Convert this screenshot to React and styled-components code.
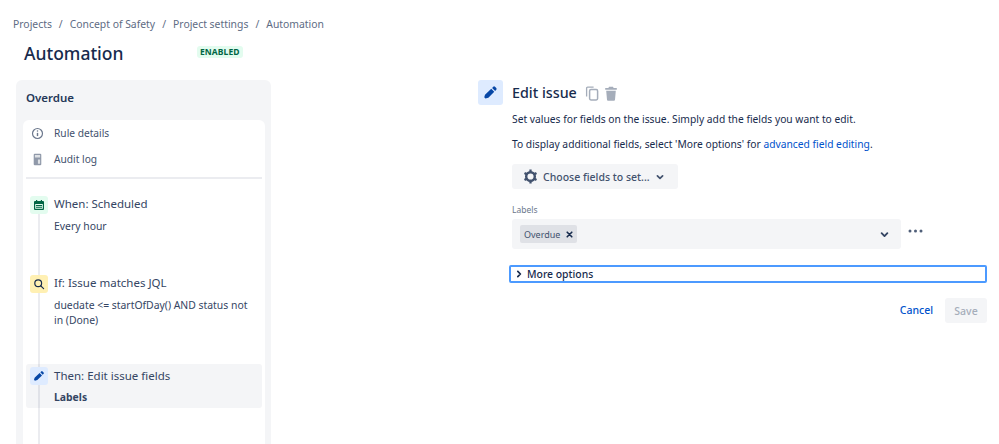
import React from 'react';
import styled, { createGlobalStyle } from 'styled-components';

const GlobalStyle = createGlobalStyle`
  html, body {
    margin: 0;
    padding: 0;
    height: 444px;
    overflow: hidden;
    background: #fff;
    font-family: 'Noto Sans', 'Open Sans', sans-serif;
    color: #172b4d;
  }
`;

const Page = styled.div`
  width: 999px;
  height: 444px;
  overflow: hidden;
  display: flex;
  flex-direction: column;
`;

const Breadcrumbs = styled.nav`
  display: flex;
  gap: 7px;
  padding: 16px 0 0 13px;
  height: 16px;
  font-size: 10.38px;
  line-height: 16px;
  color: #5e6c84;
`;

const Header = styled.header`
  display: flex;
  padding: 8px 0 0 24px;
  height: 40px;
`;

const Title = styled.h1`
  margin: 0;
  width: 173px;
  font-size: 17.5px;
  font-weight: 500;
  line-height: 26px;
  color: #172b4d;
`;

const Badge = styled.span`
  align-self: flex-start;
  margin-top: 6px;
  height: 12px;
  padding: 0 3px;
  border-radius: 3px;
  background: #e3fcef;
  color: #006644;
  font-size: 8.5px;
  font-weight: 700;
  line-height: 12px;
  letter-spacing: 0.1px;
`;

const Main = styled.main`
  display: flex;
  flex: 1;
  min-height: 0;
  padding-left: 16px;
`;

const Sidebar = styled.aside`
  flex: none;
  width: 255px;
  margin-bottom: -20px;
  padding: 0 6px 0 7px;
  box-sizing: border-box;
  background: #f4f5f7;
  border-radius: 6px;
`;

const SidebarTitle = styled.h2`
  margin: 0;
  padding-left: 3px;
  height: 36px;
  font-size: 11.5px;
  font-weight: 600;
  line-height: 36px;
  color: #253858;
`;

const RuleCard = styled.div`
  position: relative;
  height: 340px;
  padding: 0 3px;
  background: #fff;
  border-radius: 6px 6px 0 0;
`;

const NavRow = styled.div`
  display: flex;
  align-items: center;
  height: 26px;
  padding-left: 5px;
  gap: 10px;
  font-size: 10.2px;
  color: #42526e;
  & > svg { flex: none; width: 13px; height: 13px; color: #6b778c; }
  &:first-child { margin-top: 4px; }
`;

const Divider = styled.hr`
  margin: 5px 0 0;
  border: 0;
  height: 2px;
  background: #ebecf0;
`;

const Steps = styled.div`
  position: relative;
  padding-top: 17px;
`;

const Connector = styled.div`
  position: absolute;
  left: 12px;
  top: 30px;
  bottom: -200px;
  width: 2px;
  background: #ebecf0;
`;

const Step = styled.div`
  position: relative;
  display: flex;
  gap: 6px;
  box-sizing: border-box;
  height: ${p => p.$height}px;
  padding: ${p => (p.$active ? '3px 4px 0' : '0 4px')};
  margin-top: ${p => (p.$active ? '-3px' : '0')};
  border-radius: 3px;
  background: ${p => (p.$active ? 'rgba(9, 30, 66, 0.045)' : 'transparent')};
`;

const StepIcon = styled.span`
  flex: none;
  display: flex;
  align-items: center;
  justify-content: center;
  width: 18px;
  height: 18px;
  border-radius: 3px;
  background: ${p => p.$bg};
  color: ${p => p.$color};
  svg { width: 12px; height: 12px; }
`;

const StepBody = styled.div`
  min-width: 0;
`;

const StepTitle = styled.div`
  font-size: 11.5px;
  line-height: ${p => (p.$active ? 18 : 16)}px;
  margin-bottom: ${p => (p.$active ? 5 : 7)}px;
  color: #344563;
`;

const StepText = styled.div`
  font-size: 10.4px;
  line-height: 14.5px;
  color: #344563;
  font-weight: ${p => (p.$bold ? 700 : 400)};
`;

const Detail = styled.section`
  flex: none;
  margin-left: 207px;
  width: 509px;
`;

const DetailHead = styled.div`
  display: flex;
  gap: 9px;
  height: 26px;
`;

const DetailIcon = styled.span`
  flex: none;
  display: flex;
  align-items: center;
  justify-content: center;
  width: 25px;
  height: 25px;
  border-radius: 3px;
  background: #deebff;
  color: #0747a6;
  svg { width: 15px; height: 15px; }
`;

const DetailTitle = styled.h2`
  margin: 0;
  font-size: 14.3px;
  font-weight: 500;
  line-height: 26px;
  color: #172b4d;
`;

const TitleActions = styled.span`
  display: flex;
  align-items: center;
  gap: 5px;
  margin-left: -1px;
  color: #a5adba;
  svg { width: 14px; height: 15px; }
`;

const DetailBody = styled.div`
  padding-left: 34px;
`;

const Paragraph = styled.p`
  margin: 0;
  font-size: 10.27px;
  line-height: 14px;
  color: #172b4d;
  padding-top: ${p => p.$top}px;
`;

const Link = styled.a`
  color: #0052cc;
`;

const FieldButton = styled.button`
  display: flex;
  align-items: center;
  height: 25px;
  width: 166px;
  margin-top: 13px;
  padding: 0 0 0 11px;
  gap: 5px;
  border: 0;
  border-radius: 3px;
  background: #f4f5f7;
  color: #42526e;
  font: inherit;
  font-size: 10.5px;
  font-weight: 500;
  svg { flex: none; }
`;

const FieldLabel = styled.label`
  display: block;
  margin-top: 15px;
  height: 15px;
  font-size: 8.5px;
  line-height: 12px;
  color: #6b778c;
`;

const FieldRow = styled.div`
  display: flex;
  align-items: flex-start;
  gap: 7px;
  & > svg { margin-top: 10px; }
`;

const Select = styled.div`
  flex: none;
  display: flex;
  align-items: center;
  justify-content: space-between;
  box-sizing: border-box;
  width: 389px;
  height: 30px;
  padding: 0 11px 0 8px;
  border-radius: 3px;
  background: #f4f5f7;
  color: #344563;
`;

const Tag = styled.span`
  display: flex;
  align-items: center;
  gap: 6px;
  height: 18px;
  padding: 0 4px;
  border-radius: 2px;
  background: #dfe1e6;
  color: #42526e;
  font-size: 9px;
`;

const MoreBox = styled.div`
  display: flex;
  align-items: center;
  gap: 3px;
  box-sizing: border-box;
  width: 478px;
  height: 18px;
  margin: 16px 0 0 -3px;
  padding-left: 3px;
  border: 2px solid #4c9aff;
  border-radius: 2px;
  font-size: 10.4px;
  font-weight: 500;
  color: #172b4d;
`;

const Footer = styled.div`
  display: flex;
  justify-content: flex-end;
  align-items: center;
  gap: 12px;
  width: 475px;
  margin-top: 15px;
`;

const CancelButton = styled.button`
  border: 0;
  padding: 0 0 2px;
  background: none;
  color: #0052cc;
  font: inherit;
  font-size: 10.5px;
  font-weight: 500;
`;

const SaveButton = styled.button`
  width: 42px;
  height: 25px;
  padding: 0;
  border: 0;
  border-radius: 3px;
  background: #f4f5f7;
  color: #a5adba;
  font: inherit;
  font-size: 10.5px;
  font-weight: 500;
`;

const InfoIcon = () => (
  <svg viewBox="0 0 12 12" fill="none" stroke="currentColor" strokeWidth="1.1">
    <circle cx="6" cy="6" r="4.6" />
    <path d="M6 5.4v3" strokeWidth="1.3" />
    <circle cx="6" cy="3.7" r=".7" fill="currentColor" stroke="none" />
  </svg>
);

const LogIcon = () => (
  <svg viewBox="0 0 12 12" fill="currentColor">
    <path opacity="0.75" d="M2.5 1.6a1 1 0 0 1 1-1h5a1 1 0 0 1 1 1v8.8a1 1 0 0 1-1 1h-5a1 1 0 0 1-1-1z" />
    <path fill="#fff" opacity="0.7" d="M3.6 1.8h4.8v2.4H3.6zM6.4 6h2v4H6.4z" />
  </svg>
);

const CalendarIcon = () => (
  <svg viewBox="0 0 12 12" fill="currentColor">
    <path fillRule="evenodd" d="M3 1h1.2v1h3.6V1H9v1h1a1 1 0 0 1 1 1v7a1 1 0 0 1-1 1H2a1 1 0 0 1-1-1V3a1 1 0 0 1 1-1h1zM2.2 5v4.8h7.6V5z" />
    <path d="M3 6h6v1H3zM3 7.8h6v1H3z" />
  </svg>
);

const SearchIcon = () => (
  <svg viewBox="0 0 12 12" fill="none" stroke="currentColor" strokeWidth="1.2">
    <circle cx="5.2" cy="5.2" r="3.4" />
    <path d="M7.8 7.8 10.6 10.6" strokeLinecap="round" />
  </svg>
);

const PencilIcon = () => (
  <svg viewBox="0 0 12 12" fill="currentColor">
    <path d="M8.2 1.4a1 1 0 0 1 1.4 0l1 1a1 1 0 0 1 0 1.4L9.7 4.7 7.3 2.3zM6.6 3l2.4 2.4-4.7 4.7-2.4.6-.9-.9.6-2.1z" />
  </svg>
);

const CopyIcon = () => (
  <svg viewBox="0 0 14 15" fill="none" stroke="currentColor" strokeWidth="1.3">
    <rect x="4.6" y="3.6" width="8" height="10.4" rx="1.4" strokeWidth="1.5" />
    <path d="M1.6 10.5V2.2a1 1 0 0 1 1-1h6" />
  </svg>
);

const TrashIcon = () => (
  <svg viewBox="0 0 14 15" fill="currentColor">
    <path d="M5 .8h4l.6 1.2h3.2v1.7H1.2V2h3.2zM2.2 4.8h9.6l-.8 9a1 1 0 0 1-1 .9H4a1 1 0 0 1-1-.9z" />
  </svg>
);

const GearIcon = () => (
  <svg width="15" height="15" viewBox="0 0 16 16" fill="none" stroke="#42526e" strokeWidth="2.6">
    <circle cx="8" cy="8" r="4.6" />
    <path d="M8 .6v2.6M8 12.8v2.6M1.6 4.3l2.3 1.3M12.1 10.4l2.3 1.3M1.6 11.7l2.3-1.3M12.1 5.6l2.3-1.3" strokeWidth="2.4" />
  </svg>
);

const Chevron = ({ size = 10, right }) => (
  <svg
    width={size}
    height={size}
    viewBox="0 0 10 10"
    fill="none"
    stroke="currentColor"
    strokeWidth="1.7"
    strokeLinecap="round"
    strokeLinejoin="round"
  >
    <path d={right ? 'M3.8 2.4 6.4 5 3.8 7.6' : 'M2.4 3.8 5 6.4l2.6-2.6'} />
  </svg>
);

const CloseIcon = () => (
  <svg width="7" height="7" viewBox="0 0 7 7" stroke="#172b4d" strokeWidth="1.6" strokeLinecap="round">
    <path d="M1.2 1.2l4.6 4.6M5.8 1.2 1.2 5.8" />
  </svg>
);

const Dots = () => (
  <svg width="15" height="4" viewBox="0 0 15 4" fill="#505f79">
    <circle cx="2" cy="2" r="1.5" />
    <circle cx="7.5" cy="2" r="1.5" />
    <circle cx="13" cy="2" r="1.5" />
  </svg>
);

const crumbs = ['Projects', '/', 'Concept of Safety', '/', 'Project settings', '/', 'Automation'];

export default function App() {
  return (
    <Page>
      <GlobalStyle />
      <Breadcrumbs>
        {crumbs.map((c, i) => (
          <span key={i}>{c}</span>
        ))}
      </Breadcrumbs>
      <Header>
        <Title>Automation</Title>
        <Badge>ENABLED</Badge>
      </Header>
      <Main>
        <Sidebar>
          <SidebarTitle>Overdue</SidebarTitle>
          <RuleCard>
            <NavRow>
              <InfoIcon />
              Rule details
            </NavRow>
            <NavRow>
              <LogIcon />
              Audit log
            </NavRow>
            <Divider />
            <Steps>
              <Connector />
              <Step $height={79}>
                <StepIcon $bg="#e3fcef" $color="#006644">
                  <CalendarIcon />
                </StepIcon>
                <StepBody>
                  <StepTitle>When: Scheduled</StepTitle>
                  <StepText>Every hour</StepText>
                </StepBody>
              </Step>
              <Step $height={92}>
                <StepIcon $bg="#fff0b3" $color="#172b4d">
                  <SearchIcon />
                </StepIcon>
                <StepBody>
                  <StepTitle>If: Issue matches JQL</StepTitle>
                  <StepText>duedate &lt;= startOfDay() AND status not in (Done)</StepText>
                </StepBody>
              </Step>
              <Step $height={44} $active>
                <StepIcon $bg="#deebff" $color="#0747a6">
                  <PencilIcon />
                </StepIcon>
                <StepBody>
                  <StepTitle $active>Then: Edit issue fields</StepTitle>
                  <StepText $bold>Labels</StepText>
                </StepBody>
              </Step>
            </Steps>
          </RuleCard>
        </Sidebar>
        <Detail>
          <DetailHead>
            <DetailIcon>
              <PencilIcon />
            </DetailIcon>
            <DetailTitle>Edit issue</DetailTitle>
            <TitleActions>
              <CopyIcon />
              <TrashIcon />
            </TitleActions>
          </DetailHead>
          <DetailBody>
            <Paragraph $top={6}>Set values for fields on the issue. Simply add the fields you want to edit.</Paragraph>
            <Paragraph $top={11}>
              To display additional fields, select 'More options' for <Link>advanced field editing</Link>.
            </Paragraph>
            <FieldButton>
              <GearIcon />
              Choose fields to set...
              <Chevron />
            </FieldButton>
            <FieldLabel>Labels</FieldLabel>
            <FieldRow>
              <Select>
                <Tag>
                  Overdue
                  <CloseIcon />
                </Tag>
                <Chevron size={11} />
              </Select>
              <Dots />
            </FieldRow>
            <MoreBox>
              <Chevron right />
              More options
            </MoreBox>
            <Footer>
              <CancelButton>Cancel</CancelButton>
              <SaveButton>Save</SaveButton>
            </Footer>
          </DetailBody>
        </Detail>
      </Main>
    </Page>
  );
}
